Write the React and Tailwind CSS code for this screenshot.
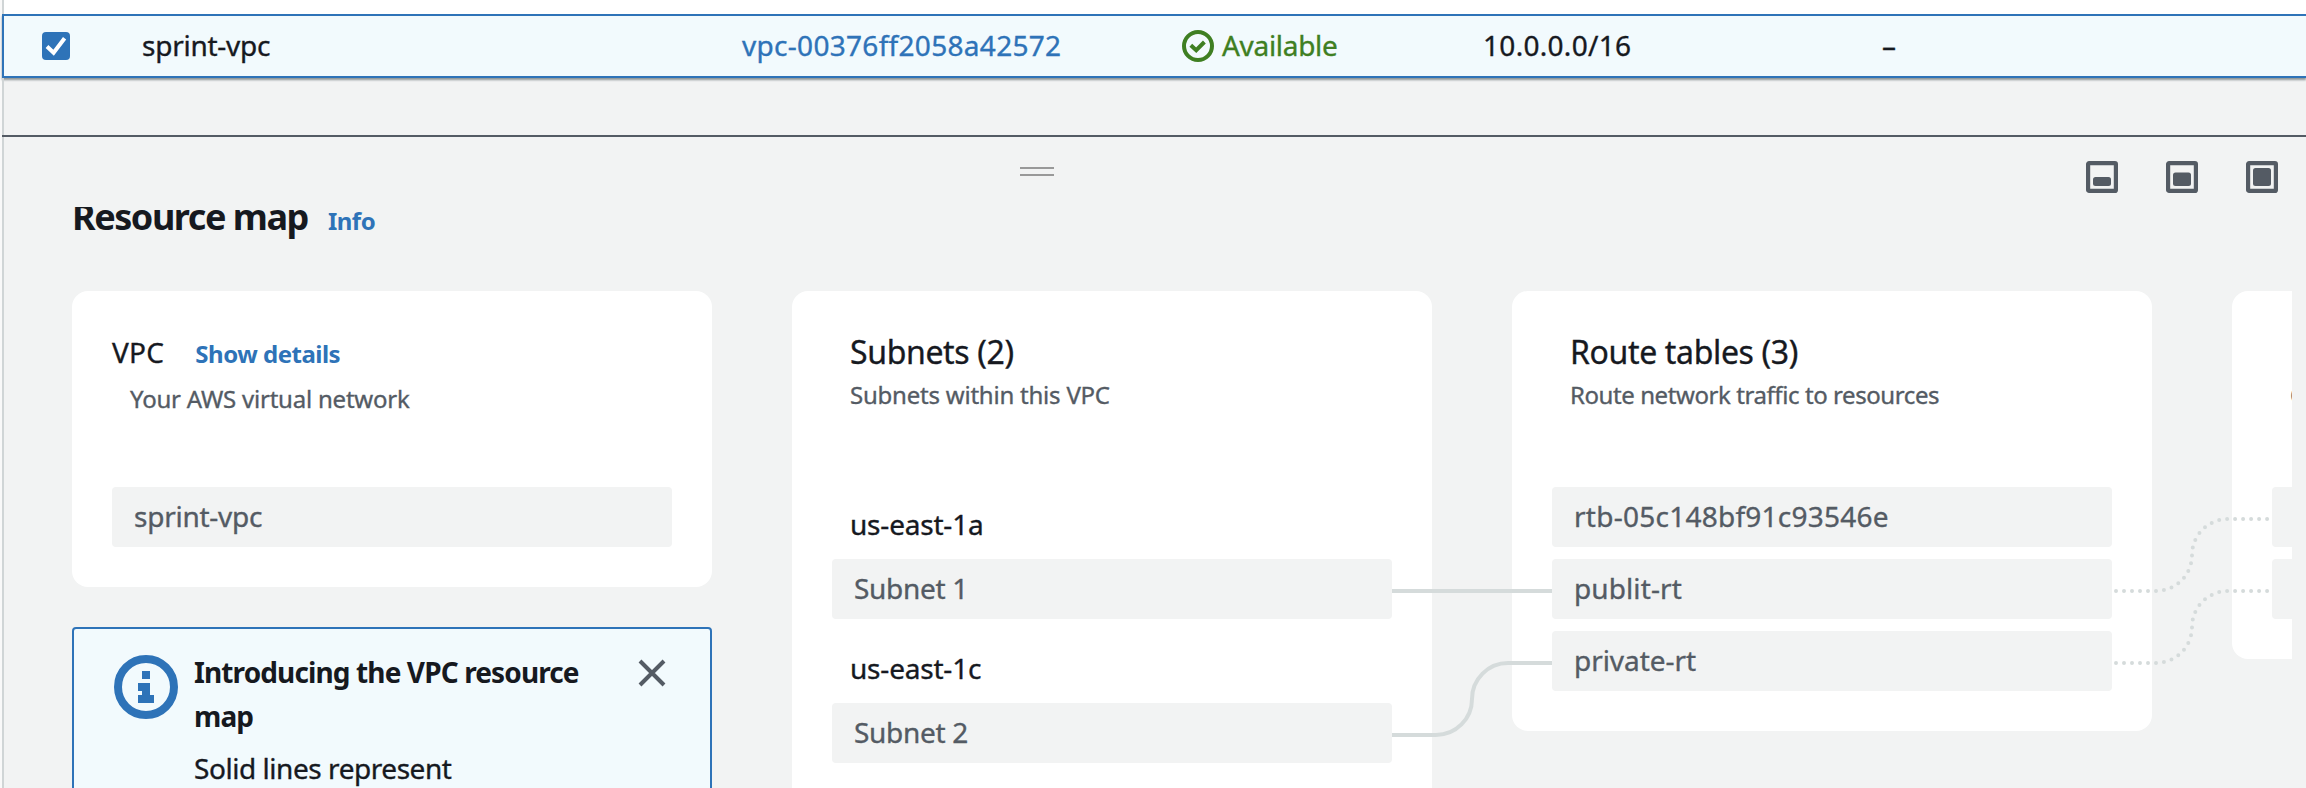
function Checkbox() {
  return (
    <svg className="h-7 w-7 shrink-0" viewBox="0 0 28 28">
      <rect width="28" height="28" rx="4" fill="#2e73b8" />
      <path d="M5 14.5 L11.6 20.8 L22.6 6.2" fill="none" stroke="#fff" strokeWidth="4" />
    </svg>
  );
}

function StatusIcon() {
  return (
    <svg className="h-8 w-8 shrink-0" viewBox="0 0 32 32" fill="none" stroke="#3f7f22" strokeWidth="4">
      <circle cx="16" cy="16" r="14" />
      <path d="M8.8 15.2 L14.2 20.2 L22.4 12" />
    </svg>
  );
}

function InfoIcon() {
  return (
    <svg className="h-16 w-16 shrink-0" viewBox="0 0 64 64">
      <circle cx="32" cy="32" r="28" fill="none" stroke="#2e73b8" strokeWidth="8" />
      <path d="M28 16h8v8h-8z M24 28h12v12h4v8H24v-8h4v-4h-4z" fill="#2e73b8" />
    </svg>
  );
}

function CloseIcon() {
  return (
    <svg className="h-7 w-7 shrink-0" viewBox="0 0 28 28" stroke="#545b64" strokeWidth="4">
      <path d="M2 2 L26 26 M26 2 L2 26" />
    </svg>
  );
}

function PanelSizeIcon({ top }) {
  return (
    <svg className="h-8 w-8 shrink-0" viewBox="0 0 32 32">
      <rect x="2.1" y="2.1" width="27.8" height="27.8" rx="1" fill="none" stroke="#545b64" strokeWidth="4.2" />
      <rect x="7" y={top} width="18" height={25 - top} rx="2.5" fill="#545b64" />
    </svg>
  );
}

function Item({ children, className = "" }) {
  return (
    <div className={`flex h-15 shrink-0 items-center rounded bg-[#f2f3f3] pb-0.5 pl-[22px] text-[28px] text-[#545b64] ${className}`}>
      {children}
    </div>
  );
}

function Zone({ children }) {
  return <div className="flex h-[72px] items-center pt-0.5 pl-[18px] text-[28px] tracking-[-0.2px]">{children}</div>;
}

function CardHeading({ title, subtitle, subtitleClass = "" }) {
  return (
    <div className="flex h-[156px] shrink-0 flex-col pl-[18px]">
      <h3 className="-mt-px h-11 text-[32px] leading-11 tracking-[-0.35px]">{title}</h3>
      <p className={`mt-[3px] text-[24px] leading-9 whitespace-nowrap text-[#545b64] ${subtitleClass}`}>{subtitle}</p>
    </div>
  );
}

export default function App() {
  return (
    <div className="flex h-[788px] w-full overflow-hidden bg-[#f2f3f3] font-['Noto_Sans','Open_Sans',sans-serif] text-[#16191f] antialiased [-webkit-text-stroke:0.35px]">
      <div className="w-0.5 shrink-0 bg-[#f9f9f9]" />
      <div className="flex min-w-0 flex-1 flex-col">
        <div className="h-3.5 shrink-0 border-l-2 border-[#d0d5d6] bg-white" />
        <div className="grid h-16 shrink-0 grid-cols-[100px_600px_438px_302px_398px_1fr] items-center border-y-2 border-l-2 border-[#2e73b8] bg-[#f2fafd] text-[28px] leading-10 shadow-[0_2px_2px_#8d9496]">
          <div className="pl-[38px]"><Checkbox /></div>
          <div className="pb-0.5 pl-[38px] tracking-[-0.25px]">sprint-vpc</div>
          <div className="pb-0.5 pl-[38px] tracking-[0.3px] text-[#2e73b8]">vpc-00376ff2058a42572</div>
          <div className="flex items-center gap-2 pl-[40px] text-[#3f7f22]">
            <StatusIcon />
            <span className="pb-0.5 tracking-[-0.3px]">Available</span>
          </div>
          <div className="pb-0.5 pl-[39px] tracking-[0.3px]">10.0.0.0/16</div>
          <div className="pb-0.5 pl-[40px]">–</div>
        </div>
        <div className="h-[57px] shrink-0 border-l-2 border-[#d0d5d6]" />
        <div className="flex min-h-0 flex-1 flex-col border-t-2 border-[#545b64]">
          <div className="flex min-h-0 flex-1 flex-col border-l-2 border-[#d0d5d6]">
            <div className="flex h-[70px] shrink-0 items-start pr-7">
              <div className="mt-[30px] ml-[1016px] h-[9px] w-[34px] border-y-2 border-[#999999]" />
              <div className="mt-6 ml-auto flex gap-12">
                <PanelSizeIcon top={16} />
                <PanelSizeIcon top={11.5} />
                <PanelSizeIcon top={7} />
              </div>
            </div>
            <div className="mr-3.5 ml-[68px] flex min-h-0 flex-1 flex-col overflow-hidden">
              <div className="-mt-[10px] flex h-10 shrink-0 items-baseline leading-10">
                <h2 className="text-[36px] leading-10 font-bold tracking-[-1.45px] [-webkit-text-stroke:0]">Resource map</h2>
                <a className="ml-5 text-[24px] leading-10 font-bold tracking-[-0.5px] text-[#2e73b8] [-webkit-text-stroke:0]">Info</a>
              </div>
              <div className="relative mt-[54px] flex shrink-0 items-start gap-20">
                <div className="flex w-[640px] shrink-0 flex-col gap-10">
                  <section className="flex h-[296px] flex-col rounded-2xl bg-white px-10 pt-10">
                    <div className="-mt-px flex h-11 items-baseline">
                      <h3 className="text-[28px] leading-11 tracking-[0.3px]">VPC</h3>
                      <a className="ml-[31px] text-[24px] leading-11 font-bold tracking-[-0.5px] text-[#2e73b8] [-webkit-text-stroke:0]">Show details</a>
                    </div>
                    <p className="mt-[7px] h-[106px] pl-[18px] text-[24px] leading-9 tracking-[-0.22px] text-[#545b64]">Your AWS virtual network</p>
                    <Item className="tracking-[-0.25px]">sprint-vpc</Item>
                  </section>
                  <section className="flex h-[260px] items-start rounded border-2 border-[#2e73b8] bg-[#f2fafd] pt-[26px] pr-11 pl-10">
                    <InfoIcon />
                    <div className="ml-4 flex w-[410px] flex-col gap-2 text-[28px] leading-11">
                      <p className="-mt-[5px] font-bold tracking-[-0.88px] [-webkit-text-stroke:0]">Introducing the VPC resource map</p>
                      <p className="tracking-[-0.45px]">Solid lines represent</p>
                    </div>
                    <div className="mt-1 ml-auto"><CloseIcon /></div>
                  </section>
                </div>
                <section className="flex h-[560px] w-[640px] shrink-0 flex-col rounded-2xl bg-white px-10 pt-10">
                  <CardHeading title="Subnets (2)" subtitle="Subnets within this VPC" subtitleClass="tracking-[-0.22px]" />
                  <Zone>us-east-1a</Zone>
                  <Item className="tracking-[-0.3px]">Subnet 1</Item>
                  <div className="mt-3">
                    <Zone>us-east-1c</Zone>
                    <Item className="tracking-[-0.3px]">Subnet 2</Item>
                  </div>
                </section>
                <section className="flex h-[440px] w-[640px] shrink-0 flex-col rounded-2xl bg-white px-10 pt-10">
                  <CardHeading title="Route tables (3)" subtitle="Route network traffic to resources" subtitleClass="tracking-[-0.42px]" />
                  <div className="flex flex-col gap-3">
                    <Item className="tracking-[0.25px]">rtb-05c148bf91c93546e</Item>
                    <Item className="tracking-[0.1px]">publit-rt</Item>
                    <Item className="tracking-[-0.05px]">private-rt</Item>
                  </div>
                </section>
                <section className="flex h-[368px] w-[60px] shrink-0 flex-col overflow-hidden rounded-l-2xl bg-white pt-10 pl-10">
                  <CardHeading title="" subtitle="C" />
                  <div className="flex flex-col gap-3">
                    <div className="h-15 rounded-l bg-[#f2f3f3]" />
                    <div className="h-15 rounded-l bg-[#f2f3f3]" />
                  </div>
                </section>
                <svg className="absolute top-0 left-[1320px] h-[460px] w-[880px]" viewBox="1392 291 880 460" fill="none" stroke="#d5dbdb" strokeWidth="4">
                  <path d="M1392 591H1552" />
                  <path d="M1392 735H1436A36 36 0 0 0 1472 699A36 36 0 0 1 1508 663H1552" />
                  <g strokeDasharray="0 8" strokeLinecap="round" strokeDashoffset="-4">
                    <path d="M2112 591H2156A36 36 0 0 0 2192 555A36 36 0 0 1 2228 519H2270" />
                    <path d="M2112 663H2156A36 36 0 0 0 2192 627A36 36 0 0 1 2228 591H2270" />
                  </g>
                </svg>
              </div>
            </div>
          </div>
        </div>
      </div>
    </div>
  );
}
